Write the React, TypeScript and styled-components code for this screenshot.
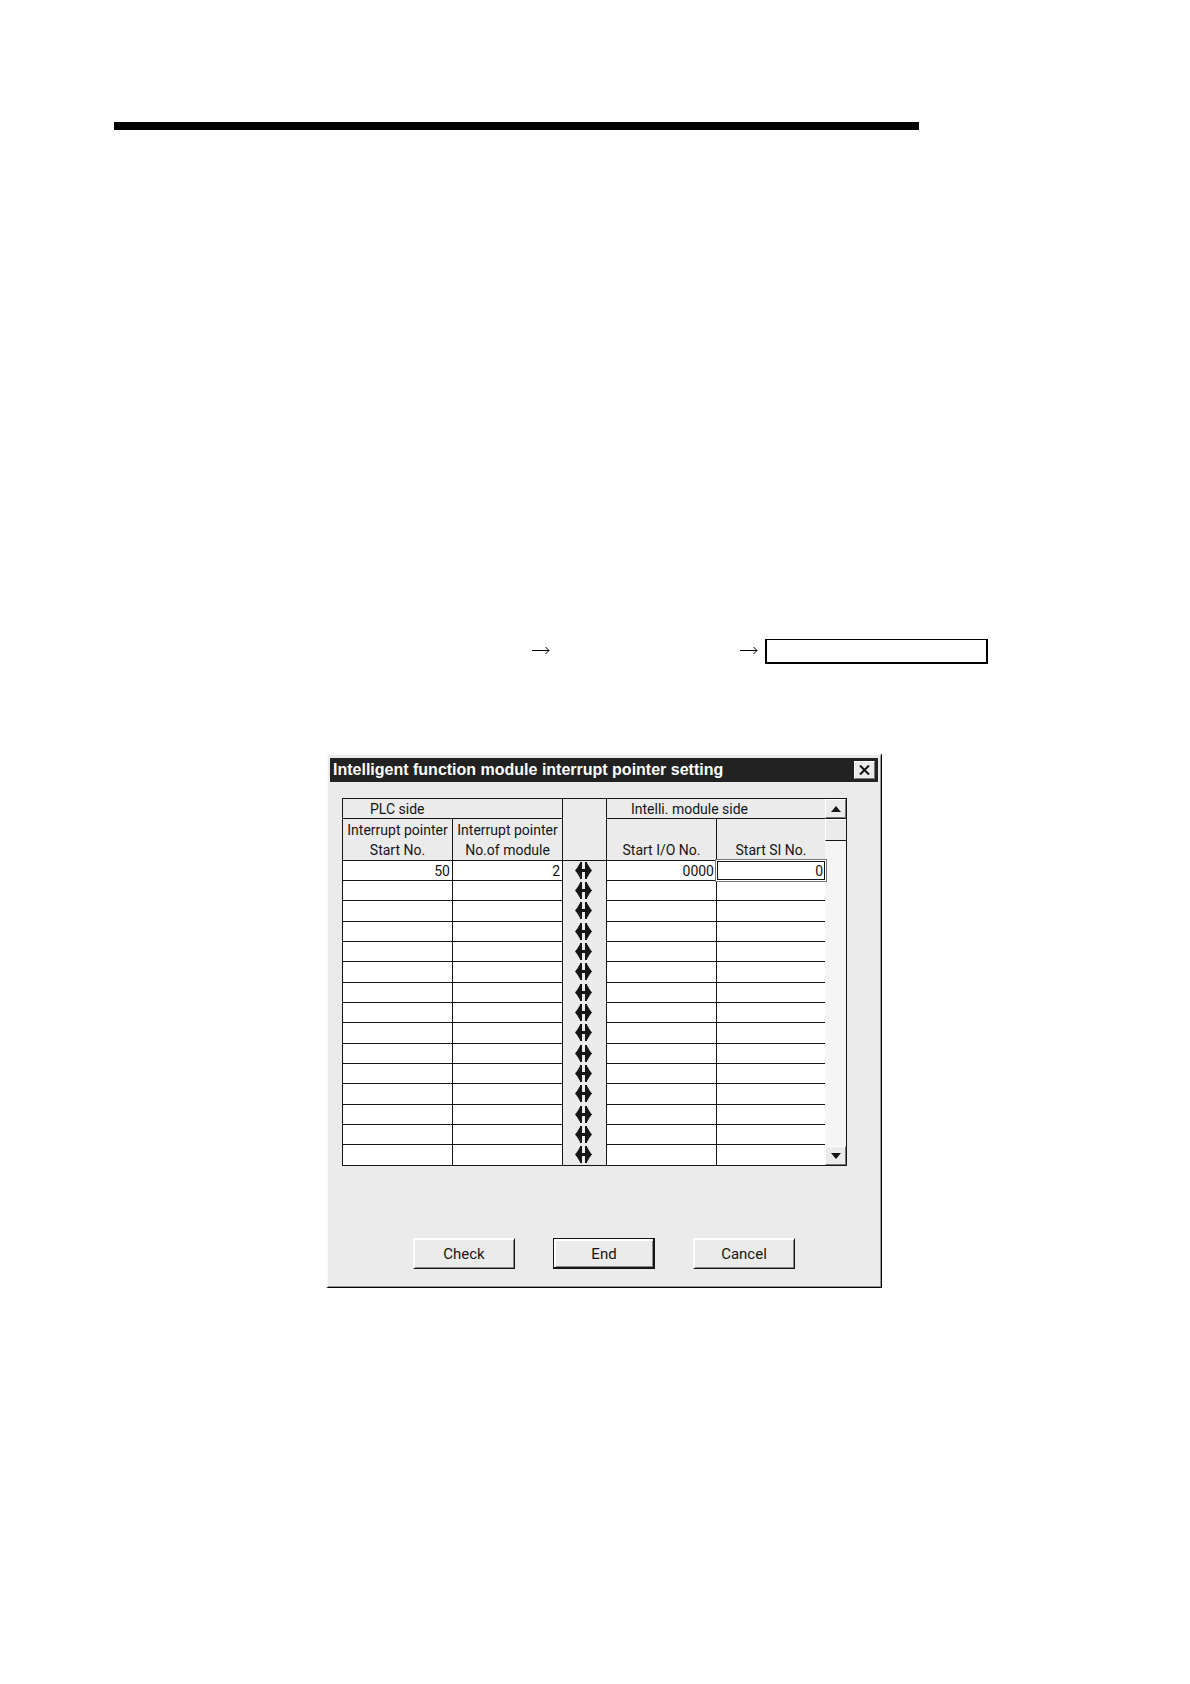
import React, { useState } from "react";
import styled, { createGlobalStyle, css } from "styled-components";

const face = "#ebebeb";
const ink = "#151515";
const uiFont = `Roboto, "Liberation Sans", sans-serif`;

const GlobalStyle = createGlobalStyle`
  *, *::before, *::after { box-sizing: border-box; }
  body { margin: 0; background: #fff; color: ${ink}; font-family: ${uiFont}; }
  button, input { font: inherit; color: inherit; }
`;

const Page = styled.main`
  padding: 122px 114px;
`;

const HeaderRule = styled.hr`
  margin: 0;
  width: 100%;
  max-width: 805px;
  height: 8px;
  border: 0;
  background: #000;
`;

const Path = styled.div`
  display: flex;
  align-items: center;
  margin-top: 509px;
  padding-left: 418px;
`;

const PathArrow = styled.svg`
  flex: none;
  width: 18px;
  height: 8px;
  margin-top: -3px;
`;

const PathGap = styled.span`
  flex: 0 1 190px;
`;

const PathBox = styled.span`
  flex: 0 0 223px;
  height: 25px;
  margin-left: 7px;
  border: 2px solid #000;
  border-top-width: 1px;
`;

const Dialog = styled.section`
  width: 556px;
  margin: 89px 0 0 212px;
  padding: 3px 3px 18px 2px;
  background: ${face};
  border: solid;
  border-width: 2px 1px 1px 2px;
  border-color: #fafafa #000 #000 #fafafa;
  box-shadow: inset -1px -1px 0 #999;
`;

const TitleBar = styled.header`
  display: flex;
  align-items: center;
  justify-content: space-between;
  height: 24px;
  padding: 0 3px;
  background: #222;
  color: #fff;
`;

const Title = styled.h1`
  margin: 0;
  font: bold 16px/20px "Liberation Sans", Arial, sans-serif;
`;

const raised = css`
  background: ${face};
  border: 1px solid;
  border-color: #fff #777 #777 #fff;
`;

const CloseButton = styled.button`
  ${raised}
  display: grid;
  place-items: center;
  width: 21px;
  height: 18px;
  padding: 0;
`;

const GridArea = styled.div`
  display: flex;
  width: 505px;
  margin: 16px 0 0 12px;
  border: 1px solid ${ink};
  border-bottom: 0;
`;

const Table = styled.table`
  flex: 1;
  table-layout: fixed;
  border-spacing: 0;
  font-size: 14px;
  line-height: 20px;
`;

const HeadCell = styled.th<{ $indent?: number; $last?: boolean }>`
  height: ${(p) => (p.colSpan === 2 ? 20 : 42)}px;
  padding: 0 0 0 ${(p) => p.$indent || 0}px;
  border-bottom: 1px solid ${ink};
  border-right: ${(p) => (p.$last ? "0" : `1px solid ${ink}`)};
  font-weight: normal;
  text-align: ${(p) => (p.$indent ? "left" : "center")};
  vertical-align: bottom;
  line-height: ${(p) => (p.colSpan === 2 ? 18 : 20)}px;
  white-space: pre;
`;

const Row = styled.tr`
  height: 20px;
  &:nth-child(3n) { height: 21px; }
`;

const Cell = styled.td<{ $last?: boolean }>`
  height: inherit;
  padding: 0;
  background: #fff;
  border-bottom: 1px solid ${ink};
  border-right: ${(p) => (p.$last ? "0" : `1px solid ${ink}`)};
`;

const LinkCell = styled.td`
  padding: 0 0 0 12px;
  border-right: 1px solid ${ink};
  line-height: 0;
  vertical-align: top;
  tr:last-child > & { border-bottom: 1px solid ${ink}; }
`;

const CellInput = styled.input<{ $selected?: boolean }>`
  display: block;
  width: 100%;
  height: 19px;
  padding: 0 2px;
  border: 0;
  background: #fff;
  text-align: right;
  outline: none;
  ${(p) =>
    p.$selected &&
    css`
      position: relative;
      padding: 0 1px;
      border: 1px solid ${ink};
      box-shadow: 0 0 0 1px #fff, 0 0 0 2px #777;
    `}
`;

const ScrollBar = styled.div`
  display: flex;
  flex-direction: column;
  flex: 0 0 21px;
  background: #f5f5f5;
  border-bottom: 1px solid ${ink};
`;

const ScrollButton = styled.button`
  ${raised}
  display: grid;
  place-items: center;
  height: 19px;
  padding: 0;
`;

const Thumb = styled.div`
  height: 23px;
  background: ${face};
  border: solid;
  border-width: 1px 0 1px 1px;
  border-color: ${ink} #777 ${ink} #fff;
  box-shadow: inset 0 1px 0 #fff;
`;

const Track = styled.div`
  flex: 1;
`;

const Actions = styled.footer`
  display: flex;
  justify-content: center;
  gap: 38px;
  margin-top: 72px;
`;

const ActionButton = styled.button<{ $primary?: boolean }>`
  width: 102px;
  height: 31px;
  padding: 0;
  background: ${face};
  border: 1px solid;
  border-color: ${(p) => (p.$primary ? ink : `#fff ${ink} ${ink} #fff`)};
  box-shadow: ${(p) =>
    p.$primary
      ? `inset -1px -1px 0 ${ink}, inset 2px 2px 0 #fff, inset -2px -2px 0 #888`
      : "inset 1px 1px 0 #fff, inset -1px -1px 0 #888"};
  font-size: 15px;
  line-height: 20px;
`;

const RightArrow = () => (
  <PathArrow viewBox="0 0 18 8" fill="none" stroke="#000" aria-hidden="true">
    <path d="M0 4.5H17M13.5 1L17 4.5L13.5 8" />
  </PathArrow>
);

const LinkIcon = () => (
  <svg width="17" height="19" viewBox="0 0 17 19" fill={ink} aria-hidden="true">
    <path d="M0 9.5L2 7L5 2V1H7V8H10V1H12V2L15 7L17 9.5L15 12L12 17V18H10V11H7V18H5V17L2 12Z" />
  </svg>
);

const emptyRow = ["", "", "", ""];
const initialRows = [["50", "2", "0000", "0"], ...Array.from({ length: 14 }, () => emptyRow)];
const columns = ["Interrupt pointer start No.", "Interrupt pointer No. of module", "Start I/O No.", "Start SI No."];

export default function App() {
  const [rows, setRows] = useState(initialRows);
  const edit = (r: number, c: number, value: string) =>
    setRows(rows.map((row, i) => (i === r ? row.map((v, j) => (j === c ? value : v)) : row)));

  const cell = (r: number, c: number) => (
    <Cell key={c} $last={c === 3}>
      <CellInput
        aria-label={`${columns[c]}, row ${r + 1}`}
        $selected={r === 0 && c === 3}
        value={rows[r][c]}
        onChange={(e) => edit(r, c, e.target.value)}
      />
    </Cell>
  );

  return (
    <>
      <GlobalStyle />
      <Page>
        <HeaderRule />
        <Path>
          <RightArrow />
          <PathGap />
          <RightArrow />
          <PathBox />
        </Path>
        <Dialog role="dialog" aria-labelledby="dialog-title">
          <TitleBar>
            <Title id="dialog-title">Intelligent function module interrupt pointer setting</Title>
            <CloseButton aria-label="Close">
              <svg width="11" height="10" viewBox="0 0 11 10" stroke="#111" strokeWidth="2" aria-hidden="true">
                <path d="M1 0.5L10 9.5M10 0.5L1 9.5" />
              </svg>
            </CloseButton>
          </TitleBar>
          <GridArea>
            <Table>
              <colgroup>
                <col width="110" />
                <col width="110" />
                <col width="44" />
                <col width="110" />
                <col />
              </colgroup>
              <thead>
                <tr>
                  <HeadCell colSpan={2} $indent={27}>PLC side</HeadCell>
                  <HeadCell rowSpan={2} aria-label="Link" />
                  <HeadCell colSpan={2} $indent={24} $last>Intelli. module side</HeadCell>
                </tr>
                <tr>
                  <HeadCell>{"Interrupt pointer\nStart No."}</HeadCell>
                  <HeadCell>{"Interrupt pointer\nNo.of module"}</HeadCell>
                  <HeadCell>Start I/O No.</HeadCell>
                  <HeadCell $last>Start SI No.</HeadCell>
                </tr>
              </thead>
              <tbody>
                {rows.map((_, r) => (
                  <Row key={r}>
                    {cell(r, 0)}
                    {cell(r, 1)}
                    <LinkCell><LinkIcon /></LinkCell>
                    {cell(r, 2)}
                    {cell(r, 3)}
                  </Row>
                ))}
              </tbody>
            </Table>
            <ScrollBar>
              <ScrollButton aria-label="Scroll up">
                <svg width="10" height="6" viewBox="0 0 10 6" fill={ink} aria-hidden="true"><path d="M0 6L5 0L10 6Z" /></svg>
              </ScrollButton>
              <Thumb />
              <Track />
              <ScrollButton aria-label="Scroll down">
                <svg width="10" height="6" viewBox="0 0 10 6" fill={ink} aria-hidden="true"><path d="M0 0L5 6L10 0Z" /></svg>
              </ScrollButton>
            </ScrollBar>
          </GridArea>
          <Actions>
            <ActionButton>Check</ActionButton>
            <ActionButton $primary>End</ActionButton>
            <ActionButton>Cancel</ActionButton>
          </Actions>
        </Dialog>
      </Page>
    </>
  );
}
